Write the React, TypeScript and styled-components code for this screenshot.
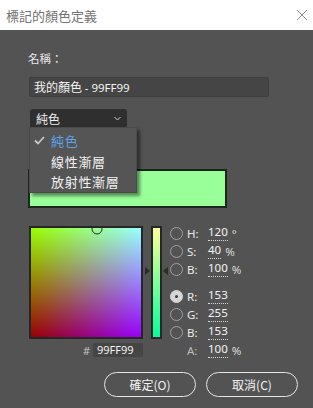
import React from "react";
import styled, { createGlobalStyle } from "styled-components";

const Global = createGlobalStyle`
  html, body { margin: 0; padding: 0; background: #535353; }
  body { font-family: "Noto Sans", "Noto Sans CJK TC", sans-serif; }
  * { box-sizing: border-box; }
`;

const Window = styled.div`
  width: 313px;
  height: 408px;
  display: flex;
  flex-direction: column;
  overflow: hidden;
`;

const TitleBar = styled.div`
  height: 30px;
  flex: none;
  background: #ffffff;
  display: flex;
  align-items: center;
  justify-content: space-between;
  padding: 0 5px 0 6px;
`;

const Title = styled.span`
  font-family: "Noto Sans CJK TC", sans-serif;
  font-size: 13px;
  color: #727272;
`;

const Body = styled.div`
  flex: 1;
  background: #535353;
  padding: 20px 0 0 28px;
  display: flex;
  flex-direction: column;
  color: #f0f0f0;
  font-family: "Noto Sans CJK TC", sans-serif;
`;

const Label = styled.div`
  font-size: 11.5px;
  line-height: 16px;
  height: 16px;
  color: #e8e8e8;
`;

const NameInput = styled.div`
  margin: 11px 0 0 1px;
  width: 240px;
  height: 20px;
  background: #454545;
  border: 1px solid #3e3e3e;
  border-radius: 2px;
  font-size: 12px;
  line-height: 18px;
  padding-left: 4px;
  color: #f4f4f4;
  white-space: nowrap;
`;

const Latin = styled.span`
  font-family: "Noto Sans", sans-serif;
  font-size: 11.5px;
`;

const SelectWrap = styled.div`
  position: relative;
  margin: 12px 0 0 2px;
  width: 97px;
  height: 19px;
  z-index: 2;
`;

const SelectBox = styled.div`
  width: 100%;
  height: 100%;
  background: #2f2f2f;
  border-radius: 3px;
  display: flex;
  align-items: center;
  justify-content: space-between;
  padding: 0 6px 0 6px;
  font-size: 12px;
  color: #f0f0f0;
`;

const Menu = styled.div`
  position: absolute;
  top: 18px;
  left: -1px;
  width: 108px;
  height: 66px;
  background: #555555;
  border: 1px solid #4a4a4a;
  box-shadow: 3px 3px 3px rgba(0, 0, 0, 0.45);
  padding-top: 2px;
  display: flex;
  flex-direction: column;
`;

const MenuItem = styled.div<{ $active?: boolean }>`
  height: 21px;
  display: flex;
  align-items: center;
  padding-left: 2px;
  font-size: 13px;
  letter-spacing: 0.7px;
  color: ${(p) => (p.$active ? "#5ea2e8" : "#f2f2f2")};
`;

const Check = styled.span`
  width: 19px;
  display: flex;
  align-items: center;
  justify-content: flex-start;
  padding-left: 2px;
`;

const Swatch = styled.div<{ $color: string }>`
  margin-top: 41px;
  width: 199px;
  height: 39px;
  background: ${(p) => p.$color};
  border: 2px solid #1c261c;
`;

const PickerRow = styled.div`
  margin: 16px 0 0 1px;
  display: flex;
  align-items: flex-start;
`;

const LeftCol = styled.div`
  display: flex;
  flex-direction: column;
  width: 114px;
`;

const Square = styled.div`
  position: relative;
  margin-top: 2px;
  width: 114px;
  height: 113px;
  border: 2px solid #262626;
  overflow: hidden;
  background-color: rgb(153, 0, 0);
  background-image: linear-gradient(to right, rgb(0, 0, 0), rgb(0, 0, 255)),
    linear-gradient(to bottom, rgb(0, 255, 0), rgb(0, 0, 0));
  background-blend-mode: screen;
`;

const Marker = styled.div`
  position: absolute;
  width: 11px;
  height: 11px;
  border-radius: 50%;
  border: 1px solid #2a2a2a;
  transform: translate(-50%, -50%);
`;

const HexRow = styled.div`
  margin-top: 4px;
  display: flex;
  justify-content: flex-end;
  align-items: center;
  gap: 3px;
  height: 14px;
`;

const Hash = styled.span`
  font-family: "Noto Sans", sans-serif;
  font-size: 11px;
  color: #c4c4c4;
`;

const HexInput = styled.div`
  width: 50px;
  height: 14px;
  background: #454545;
  font-family: "Noto Sans", sans-serif;
  font-size: 11px;
  line-height: 14px;
  padding-left: 4px;
  color: #f2f2f2;
`;

const SliderWrap = styled.div`
  position: relative;
  margin: 2px 0 0 8px;
  width: 11px;
  height: 113px;
`;

const SliderBar = styled.div`
  width: 100%;
  height: 100%;
  border: 2px solid #262626;
  background: linear-gradient(to bottom, #ffff99, #00ff99);
`;

const Arrow = styled.div<{ $side: "left" | "right" }>`
  position: absolute;
  top: 41px;
  width: 0;
  height: 0;
  border-top: 4px solid transparent;
  border-bottom: 4px solid transparent;
  ${(p) =>
    p.$side === "left"
      ? "left: -6px; border-left: 5px solid #2b2b2b;"
      : "right: -6px; border-right: 5px solid #2b2b2b;"}
`;

const Fields = styled.div`
  margin-left: 8px;
  display: flex;
  flex-direction: column;
`;

const FieldGroup = styled.div`
  display: flex;
  flex-direction: column;
  & + & {
    margin-top: 9px;
  }
`;

const Field = styled.div`
  height: 18px;
  display: flex;
  align-items: center;
  font-family: "Noto Sans", sans-serif;
  font-size: 11.5px;
  color: #ececec;
`;

const Radio = styled.span<{ $on?: boolean; $hidden?: boolean }>`
  width: 13px;
  height: 13px;
  border-radius: 50%;
  flex: none;
  border: 1px solid ${(p) => (p.$hidden ? "transparent" : p.$on ? "#d6d6d6" : "#a0a0a0")};
  background: ${(p) => (p.$on ? "#d6d6d6" : "transparent")};
  display: flex;
  align-items: center;
  justify-content: center;
  &::after {
    content: "";
    width: 3px;
    height: 3px;
    border-radius: 50%;
    background: ${(p) => (p.$on ? "#3a3a3a" : "transparent")};
  }
`;

const FieldLabel = styled.span<{ $dim?: boolean }>`
  width: 21px;
  margin-left: 4px;
  color: ${(p) => (p.$dim ? "#bdbdbd" : "#ececec")};
`;

const Value = styled.span`
  border-bottom: 1px dotted #d8d8d8;
  line-height: 14px;
  padding-bottom: 1px;
  color: #f4f4f4;
`;

const Unit = styled.span`
  margin-left: 4px;
  color: #dcdcdc;
`;

const Buttons = styled.div`
  margin-top: 13px;
  display: flex;
  justify-content: flex-end;
  gap: 10px;
  padding-right: 15px;
`;

const Button = styled.button`
  width: 92px;
  height: 25px;
  border-radius: 13px;
  border: 1.5px solid #e6e6e6;
  background: transparent;
  color: #f4f4f4;
  font-family: "Noto Sans CJK TC", sans-serif;
  font-size: 12px;
  padding: 0;
  display: flex;
  align-items: center;
  justify-content: center;
`;

type FieldDef = { label: string; value: string; unit?: string; on?: boolean; noRadio?: boolean };

const hsb: FieldDef[] = [
  { label: "H:", value: "120", unit: "°" },
  { label: "S:", value: "40", unit: "%" },
  { label: "B:", value: "100", unit: "%" },
];
const rgb: FieldDef[] = [
  { label: "R:", value: "153", on: true },
  { label: "G:", value: "255" },
  { label: "B:", value: "153" },
  { label: "A:", value: "100", unit: "%", noRadio: true },
];

const renderField = (f: FieldDef, i: number) => (
  <Field key={i}>
    <Radio $on={f.on} $hidden={f.noRadio} />
    <FieldLabel $dim={f.noRadio}>{f.label}</FieldLabel>
    <Value>{f.value}</Value>
    {f.unit && <Unit>{f.unit}</Unit>}
  </Field>
);

export default function App() {
  return (
    <Window>
      <Global />
      <TitleBar>
        <Title>標記的顏色定義</Title>
        <svg width="12" height="12" viewBox="0 0 12 12">
          <path d="M1 1 L11 11 M11 1 L1 11" stroke="#8a8a8a" strokeWidth="1" />
        </svg>
      </TitleBar>
      <Body>
        <Label>名稱：</Label>
        <NameInput>
          我的顏色 <Latin>- 99FF99</Latin>
        </NameInput>
        <SelectWrap>
          <SelectBox>
            <span>純色</span>
            <svg width="7" height="5" viewBox="0 0 7 5">
              <path d="M0.5 1 L3.5 4 L6.5 1" stroke="#cfcfcf" strokeWidth="1" fill="none" />
            </svg>
          </SelectBox>
          <Menu>
            <MenuItem $active>
              <Check>
                <svg width="11" height="9" viewBox="0 0 11 9">
                  <path d="M1 4.5 L4 7.5 L10 1" stroke="#c8c8c8" strokeWidth="1.8" fill="none" />
                </svg>
              </Check>
              純色
            </MenuItem>
            <MenuItem>
              <Check />
              線性漸層
            </MenuItem>
            <MenuItem>
              <Check />
              放射性漸層
            </MenuItem>
          </Menu>
        </SelectWrap>
        <Swatch $color="#99ff99" />
        <PickerRow>
          <LeftCol>
            <Square>
              <Marker style={{ left: `${(153 / 255) * 110}px`, top: "1px" }} />
            </Square>
            <HexRow>
              <Hash>#</Hash>
              <HexInput>99FF99</HexInput>
            </HexRow>
          </LeftCol>
          <SliderWrap>
            <SliderBar />
            <Arrow $side="left" />
            <Arrow $side="right" />
          </SliderWrap>
          <Fields>
            <FieldGroup>{hsb.map(renderField)}</FieldGroup>
            <FieldGroup>{rgb.map(renderField)}</FieldGroup>
          </Fields>
        </PickerRow>
        <Buttons>
          <Button>確定(O)</Button>
          <Button>取消(C)</Button>
        </Buttons>
      </Body>
    </Window>
  );
}
